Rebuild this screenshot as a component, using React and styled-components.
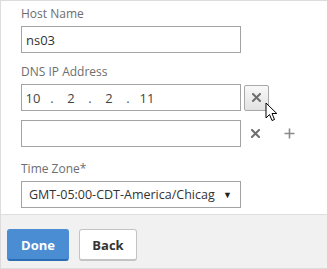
import React from 'react';
import styled, { createGlobalStyle } from 'styled-components';

const GlobalStyle = createGlobalStyle`
    body {
        margin: 0;
        background: #fff;
        font-family: "Open Sans", "Liberation Sans", sans-serif;
    }
`

function App() {
    return (
        <>
            <GlobalStyle />
            <Page>
                <Panel>
                    <Label>Host Name</Label>
                    <Field>ns03</Field>

                    <Label $top={9}>DNS IP Address</Label>
                    <IpRow>
                        <Field>
                            <Octet>10</Octet><Dot>.</Dot>
                            <Octet>2</Octet><Dot>.</Dot>
                            <Octet>2</Octet><Dot>.</Dot>
                            <Octet>11</Octet>
                        </Field>
                        <RemoveButton>
                            <CrossIcon />
                        </RemoveButton>
                        <Cursor viewBox="0 0 13 21" width="13" height="21">
                            <path d="M1 1 L1 16 L4.5 12.5 L7 18.5 L9.5 17.5 L7 11.5 L11.8 11.5 Z"
                                fill="#fff" stroke="#000" strokeWidth="1" strokeLinejoin="round" />
                        </Cursor>
                    </IpRow>
                    <IpRow $top={9}>
                        <Field />
                        <IconSlot $left={10}><CrossIcon /></IconSlot>
                        <IconSlot $left={24}>
                            <svg width="11" height="11" viewBox="0 0 11 11">
                                <path d="M5.5 0.5 V10.5 M0.5 5.5 H10.5" stroke="#8a8a8a" strokeWidth="1.6" />
                            </svg>
                        </IconSlot>
                    </IpRow>

                    <Label $top={12}>Time Zone*</Label>
                    <Select>
                        <span className="value">GMT-05:00-CDT-America/Chicag</span>
                        <span className="arrow">▼</span>
                    </Select>
                </Panel>
                <Footer>
                    <Button $primary>Done</Button>
                    <Button>Back</Button>
                </Footer>
            </Page>
        </>
    )
}

function CrossIcon() {
    return (
        <svg width="9" height="9" viewBox="0 0 9 9">
            <path d="M1 1 L8 8 M8 1 L1 8" stroke="#6f6f6f" strokeWidth="2" strokeLinecap="square" />
        </svg>
    )
}

export default App

const Page = styled.div`
    width: 327px;
    height: 269px;
    display: flex;
    flex-direction: column;
    box-sizing: border-box;
    border-left: 1px solid #dcdcdc;
    border-top: 1px solid #dcdcdc;
`
const Panel = styled.section`
    background: #fff;
    padding: 3px 0 6px 20px;
    border-bottom: 1px solid #dedede;
`
const Label = styled.div`
    margin-top: ${p => p.$top || 0}px;
    margin-bottom: 2px;
    font-size: 12px;
    line-height: 20px;
    color: #6e6e6e;
`
const Field = styled.div`
    box-sizing: border-box;
    width: 220px;
    height: 27px;
    border: 1px solid #a3a3a3;
    display: flex;
    align-items: center;
    padding-left: 4px;
    font-size: 13px;
    color: #333;
    background: #fff;
`
const IpRow = styled.div`
    position: relative;
    display: flex;
    align-items: center;
    margin-top: ${p => p.$top || 0}px;
    ${Field} {
        padding-left: 0;
    }
`
const Octet = styled.span`
    width: 22px;
    text-align: center;
    font-size: 13px;
    color: #444;
`
const Dot = styled.span`
    width: 16px;
    text-align: center;
    color: #555;
`
const RemoveButton = styled.div`
    box-sizing: border-box;
    margin-left: 3px;
    width: 25px;
    height: 26px;
    border: 1px solid #a8a8a8;
    border-radius: 2px;
    background: linear-gradient(#f8f8f8, #e2e2e2);
    display: flex;
    align-items: center;
    justify-content: center;
`
const IconSlot = styled.div`
    display: flex;
    margin-left: ${p => p.$left}px;
`
const Cursor = styled.svg`
    position: absolute;
    left: 244px;
    top: 18px;
`
const Select = styled.div`
    box-sizing: border-box;
    width: 220px;
    height: 27px;
    border: 1px solid #a3a3a3;
    display: flex;
    align-items: center;
    padding: 0 8px 0 7px;
    font-size: 12.5px;
    color: #333;
    .value {
        white-space: nowrap;
    }
    .arrow {
        margin-left: auto;
        font-size: 9px;
        color: #222;
    }
`
const Footer = styled.footer`
    flex: 1;
    background: #f1f1f1;
    border-bottom: 1px solid #dcdcdc;
    display: flex;
    align-items: flex-start;
    gap: 10px;
    padding: 14px 0 0 6px;
`
const Button = styled.button`
    box-sizing: border-box;
    height: 32px;
    width: ${p => p.$primary ? 62 : 58}px;
    border-radius: 3px;
    font-family: "Open Sans", "Liberation Sans", sans-serif;
    font-weight: 700;
    font-size: 13px;
    padding: 0;
    color: ${p => p.$primary ? '#fff' : '#333'};
    background: ${p => p.$primary ? '#4a8dd3' : '#fff'};
    border: 1px solid ${p => p.$primary ? '#4a8dd3' : '#c4c4c4'};
    border-bottom: 2px solid ${p => p.$primary ? '#2a6db5' : '#c4c4c4'};
`
